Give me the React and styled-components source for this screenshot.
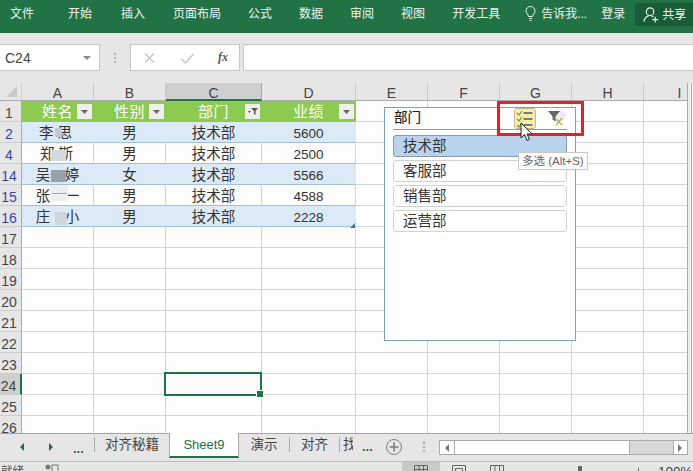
import React from 'react';
import styled, { createGlobalStyle } from 'styled-components';

const Global = createGlobalStyle`
  html, body { margin: 0; padding: 0; background: #fdfdfd; overflow: hidden; }
  * { box-sizing: border-box; }
  #root { width: 693px; height: 471px; }
`;
const FONT = `"Liberation Sans", "Noto Sans CJK SC", sans-serif`;

const Page = styled.div`
  position: relative; width: 693px; height: 471px; overflow: hidden;
  display: flex; flex-direction: column; background: #fdfdfd;
  font-family: ${FONT}; color: #333;
`;
const Ribbon = styled.div`
  height: 33px; flex: none; background: #217346; color: #eef5f1;
  display: flex; align-items: flex-start; font-size: 12px; line-height: 14px;
`;
const Tab = styled.div`
  margin-left: ${p => p.$gap}px; padding-top: 7px; white-space: nowrap;
`;
const Tell = styled.div`
  margin-left: ${p => p.$gap}px; padding-top: 7px; display: flex; align-items: flex-start; gap: 5px; white-space: nowrap;
  svg { margin-top: -1px; flex: none; }
`;
const Share = styled.div`
  margin-left: 10px; margin-top: 3px; width: 58px; height: 23px; background: #1a5c38;
  display: flex; align-items: center; padding-left: 8px; gap: 3px; white-space: nowrap;
`;
const FormulaBar = styled.div`
  height: 50px; flex: none; background: #e6e6e6; padding-top: 11px;
  display: flex; align-items: flex-start;
`;
const NameBox = styled.div`
  width: 100px; height: 27px; background: #fff; border: 1px solid #c6c6c6; border-left: none;
  display: flex; align-items: center; justify-content: space-between; padding: 0 8px 0 5px;
  font-size: 14px; color: #444;
`;
const Caret = styled.span`
  width: 0; height: 0; border-left: 4px solid transparent; border-right: 4px solid transparent;
  border-top: 4px solid #8a8a8a;
`;
const Dots = styled.div`
  width: 30px; height: 27px; display: flex; flex-direction: column; justify-content: center; align-items: center; gap: 2px;
  span { width: 2px; height: 2px; background: #b4b4b4; }
`;
const FormulaButtons = styled.div`
  width: 110px; height: 27px; background: #fff; border: 1px solid #c6c6c6; display: flex; align-items: center;
  justify-content: space-between; padding: 0 11px 0 12px;
`;
const FormulaInput = styled.div`
  flex: 1; height: 27px; margin-left: 3px; background: #fff; border: 1px solid #c6c6c6; border-right: none;
`;
const Fx = styled.span`
  font-family: "Liberation Serif", serif; font-style: italic; font-weight: bold; font-size: 12px; color: #555;
`;
const Sheet = styled.div`
  position: relative; height: 350px; flex: none; overflow: hidden; display: flex; background: #fdfdfd;
`;
const GridArea = styled.div`
  width: 688px; flex: none; display: flex; flex-direction: column; border-right: 1px solid #ababab; overflow: hidden;
`;
const HeaderRow = styled.div`
  display: flex; height: 18px; flex: none; background: #e6e6e6; border-bottom: 1px solid #ababab;
`;
const Corner = styled.div`
  width: 22px; flex: none; position: relative; border-right: 1px solid #d0d0d0;
  &::after { content: ''; position: absolute; right: 4px; bottom: 3px; width: 0; height: 0;
    border-left: 11px solid transparent; border-bottom: 11px solid #c8c8c8; }
`;
const ColHead = styled.div`
  width: ${p => p.$w}px; flex: none; text-align: center; font-size: 14px; line-height: 20px; color: #444;
  border-right: 1px solid ${p => p.$active ? '#a8a8a8' : '#c8c8c8'};
  background: ${p => p.$active ? '#cfcfcf' : 'transparent'};
  ${p => p.$active && 'border-bottom: 2px solid #217346; height: 18px;'}
`;
const Row = styled.div`
  display: flex; height: 21px; flex: none;
`;
const RowHead = styled.div`
  width: 22px; flex: none; background: ${p => p.$active ? '#cfcfcf' : '#e6e6e6'};
  border-right: ${p => p.$active ? '2px solid #217346' : '1px solid #ababab'};
  border-bottom: 1px solid #cdcdcd; overflow: hidden;
  color: ${p => p.$hidden ? '#3344b0' : '#444'}; font-size: 14px; line-height: 25px; padding-right: 3px; text-align: center;
`;
const Cell = styled.div`
  width: ${p => p.$w}px; flex: none; border-right: 1px solid ${p => p.$line || '#d4d4d4'};
  border-bottom: 1px solid ${p => p.$under || '#d4d4d4'}; background: ${p => p.$bg || 'transparent'};
  color: ${p => p.$head ? '#fff' : '#333'}; font-size: ${p => p.$head ? 15 : 14.5}px; line-height: ${p => p.$head ? 21 : 23}px; text-align: center;
  position: relative; white-space: nowrap; letter-spacing: ${p => p.$head ? '0.5px' : 0};
  padding-right: ${p => p.$pr || 0}px;
`;
const Num = styled.span`font-size: 13.5px; color: #333;`;
const FilterBtn = styled.span`
  position: absolute; right: ${p => p.$r}px; top: 3px; width: 15px; height: 15px; background: #efefef;
  display: flex; align-items: center; justify-content: center;
`;
const Blur = styled.div`
  position: absolute; background: ${p => p.$c}; filter: blur(0.7px);
`;
const Selection = styled.div`
  position: absolute; left: 164px; top: 289px; width: 98px; height: 24px; border: 2px solid #217346;
  &::after { content: ''; position: absolute; right: -4px; bottom: -4px; width: 6px; height: 6px; background: #217346; border: 1px solid #fff; }
`;
const Slicer = styled.div`
  position: absolute; left: 384px; top: 24px; width: 192px; height: 234px; background: #fff;
  border: 1px solid #7ba0bb; padding: 0 8px;
`;
const SlicerHead = styled.div`
  height: 22px; border-bottom: 1px solid #7ba0bb; font-size: 13.5px; line-height: 19px; color: #222;
  margin-bottom: 5px; padding-left: 1px; position: relative;
  -webkit-text-stroke: 0.2px #222;
`;
const SlicerItem = styled.div`
  height: 22px; margin-bottom: 3px; border-radius: 3px; font-size: 14.5px; line-height: 20px; padding-left: 9px; color: #333;
  border: 1px solid ${p => p.$on ? '#8a9aa8' : '#d2d2d2'}; background: ${p => p.$on ? '#bad3ec' : '#fff'};
`;
const IconWrap = styled.div`
  position: absolute; left: ${p => p.$l}px; top: ${p => p.$t}px; line-height: 0;
`;
const MultiBtn = styled.div`
  position: absolute; left: 121px; top: 0; width: 22px; height: 21px; background: #fbeda8; border: 1px solid #c0b68f; border-radius: 3px;
  line-height: 0;
`;
const Tip = styled.div`
  position: absolute; left: 518px; top: 69px; height: 18px; padding: 0 3px; background: #fdfdfd; border: 1px solid #c9c9c9;
  font-size: 11.500px; line-height: 16px; color: #666; white-space: nowrap;
`;
const RedBox = styled.div`
  position: absolute; left: 497px; top: 18px; width: 87px; height: 35px; border: 3px solid #ee1c25;
`;
const Cursor = styled.svg`
  position: absolute; left: 520px; top: 39px;
`;
const RightEdge = styled.div`
  width: 4px; flex: none; background: #eeeeee; border-right: 1px solid #ababab;
`;
const TabsBar = styled.div`
  height: 29px; flex: none; background: #e6e6e6; border-top: 1px solid #a5a5a5; display: flex; align-items: flex-start;
  position: relative; border-bottom: 1px solid #bdbdbd; font-size: 13px;
`;
const NavCluster = styled.div`
  width: 94px; height: 25px; flex: none; display: flex; align-items: center; padding-left: 20px; color: #1f6b3f;
`;
const Arrow = styled.span`
  width: 0; height: 0; border-top: 4px solid transparent; border-bottom: 4px solid transparent;
  ${p => p.$left ? 'border-right: 4px solid #1f6b3f;' : 'border-left: 4px solid #1f6b3f;'}
  margin-right: ${p => p.$mr}px;
`;
const More = styled.span`
  font-size: 13px; font-weight: bold; color: #1f6b3f; line-height: 12px; flex: none;
  ${p => p.$ml ? `margin: 7px 0 0 ${p.$ml}px;` : 'margin-top: 4px;'}
`;
const SheetTab = styled.div`
  width: ${p => p.$w}px; flex: none; text-align: ${p => p.$clip ? 'left' : 'center'}; color: #444; font-size: 13.5px;
  border-left: ${p => p.$plain ? 'none' : '1px solid #ababab'}; margin-top: 3px; height: 15px; line-height: 15px; overflow: hidden;
  padding-left: ${p => p.$clip ? 3 : 0}px;
`;
const ActiveTab = styled.div`
  width: 70px; flex: none; text-align: center; line-height: 21px; background: #fff; color: #217346; font-size: 13px;
  border-left: 1px solid #ababab; border-right: 1px solid #ababab; border-bottom: 2px solid #217346; margin-top: -1px; height: 25px; padding-top: 1px;
`;
const AddBtn = styled.div`
  width: 16px; height: 16px; border-radius: 50%; border: 1.5px solid #7e7e7e; margin: 5px 0 0 13px; flex: none; line-height: 0;
  display: flex; align-items: center; justify-content: center;
`;
const Vdots = styled.div`
  width: 2px; margin-left: 21px; margin-top: 8px; flex: none; height: 10px; display: flex; flex-direction: column; justify-content: space-between;
  span { width: 2px; height: 2px; background: #b0b0b0; }
`;
const HScroll = styled.div`
  width: 249px; height: 15px; margin: 6px 0 0 14px; border: 1px solid #ababab; background: #d8d8d8; display: flex; flex: none;
`;
const ScrollBtn = styled.div`
  width: 14px; background: #fff; display: flex; align-items: center; justify-content: center; flex: none;
  &:last-child { margin-left: auto; border-left: 1px solid #ababab; }
`;
const Thumb = styled.div`
  width: 176px; background: #fff; border: 1px solid #ababab; border-top: none; border-bottom: none;
`;
const ScrollArrow = styled.span`
  width: 0; height: 0; border-top: 4px solid transparent; border-bottom: 4px solid transparent;
  ${p => p.$left ? 'border-right: 4px solid #777;' : 'border-left: 4px solid #777;'}
`;
const Status = styled.div`
  height: 9px; flex: none; background: #e6e6e6; display: flex; color: #555; overflow: hidden;
`;
const StatusText = styled.span`
  width: 24px; flex: none; padding: 2px 0 0 1px; font-size: 11.500px; line-height: 14px;
`;
const StatusIcon = styled.span`
  margin: 2px 0 0 ${p => p.$ml}px; line-height: 0; flex: none;
`;
const ViewSlot = styled.div`
  width: 38px; flex: none; margin-left: ${p => p.$ml || 0}px; height: 9px; display: flex; justify-content: center; padding-top: 3px;
  background: ${p => p.$on ? '#c9c9c9' : 'transparent'}; line-height: 0;
`;
const ZoomMark = styled.span`
  width: 4px; height: 8px; background: #666; margin: 4px 0 0 ${p => p.$ml}px; flex: none;
`;
const ZoomTick = styled.span`
  width: 1px; height: 4px; background: #666; margin: 6px 0 0 ${p => p.$ml}px; flex: none;
`;
const ZoomText = styled.span`
  margin: 3px 0 0 ${p => p.$ml}px; font-size: 13.500px; line-height: 14px; color: #444; white-space: nowrap;
`;

const cols = [
  ['A', 72], ['B', 72], ['C', 96], ['D', 94], ['E', 72], ['F', 72], ['G', 72], ['H', 72], ['I', 72],
];
const headRows = ['1', '2', '4', '14', '15', '16', '17', '18', '19', '20', '21', '22', '23', '24', '25', '26'];
const data = [
  ['李 思', '男', '技术部', '5600', 4],
  ['郑 斯', '男', '技术部', '2500', 2],
  ['吴　婷', '女', '技术部', '5566', 0],
  ['张　一', '男', '技术部', '4588', 0],
  ['庄　小', '男', '技术部', '2228', 0],
];
const BLUE = '#dce9f6';
const RULE = '#9fbfdf';

const FilterIcon = ({ active }) => (
  <svg width="11" height="9" viewBox="0 0 11 9">
    {active
      ? <><path d="M4 1h7L8.500 4v4L7 7V4z" fill="#555" /><path d="M1 4h3L2.500 6z" fill="#555" /></>
      : <path d="M2 3h7L5.500 7z" fill="#666" />}
  </svg>
);

const ChecklistIcon = () => (
  <svg width="20" height="19" viewBox="0 0 20 19">
    <path d="M2 4l2 2 3-4M2 10l2 2 3-4M2 16l2 2 3-4" fill="none" stroke="#6e9a4b" strokeWidth="1.2" />
    <path d="M8.500 4h9M8.500 10h9M8.500 16h9" stroke="#4a5a6a" strokeWidth="1.3" />
  </svg>
);
const ClearFilterIcon = () => (
  <svg width="19" height="17" viewBox="0 0 19 17">
    <circle cx="13" cy="6" r="6" fill="#f6e8f6" />
    <path d="M1 1h12L8.500 6.500v5L5.500 9.500v-3z" fill="#666" />
    <path d="M9 15l6-7M9 9l6 6" stroke="#a4bf3e" strokeWidth="1.4" />
  </svg>
);

export default function App() {
  return (
    <Page>
      <Global />
      <Ribbon>
        <Tab $gap={10}>文件</Tab>
        <Tab $gap={34}>开始</Tab>
        <Tab $gap={29}>插入</Tab>
        <Tab $gap={28}>页面布局</Tab>
        <Tab $gap={27}>公式</Tab>
        <Tab $gap={27}>数据</Tab>
        <Tab $gap={27}>审阅</Tab>
        <Tab $gap={27}>视图</Tab>
        <Tab $gap={27}>开发工具</Tab>
        <Tell $gap={25}>
          <svg width="11" height="16" viewBox="0 0 11 16" fill="none" stroke="#eef5f1" strokeWidth="1">
            <path d="M3.500 10.500C3.500 8.500 1 7.500 1 5a4.500 4.500 0 0 1 9 0c0 2.500-2.500 3.500-2.500 5.500z" />
            <path d="M4 12.500h3M4.500 14.500h2" />
          </svg>
          告诉我...
        </Tell>
        <Tab $gap={14}>登录</Tab>
        <Share>
          <svg width="16" height="17" viewBox="0 0 17 17" fill="none" stroke="#eef5f1" strokeWidth="1.2">
            <circle cx="7.500" cy="5.500" r="4" />
            <path d="M1 16c.5-3 2.500-5.500 5-6M9 10l2 1M10 14h6M13 11v6" />
          </svg>
          共享
        </Share>
      </Ribbon>
      <FormulaBar>
        <NameBox>C24<Caret /></NameBox>
        <Dots><span /><span /><span /></Dots>
        <FormulaButtons>
          <svg width="13" height="12" viewBox="0 0 12 12"><path d="M1.500 1.500l9 9M10.500 1.500l-9 9" stroke="#c4c4c4" strokeWidth="1.400" /></svg>
          <svg width="15" height="12" viewBox="0 0 14 12"><path d="M1 7l4 4 8-9" fill="none" stroke="#c4c4c4" strokeWidth="1.400" /></svg>
          <Fx>fx</Fx>
        </FormulaButtons>
        <FormulaInput />
      </FormulaBar>
      <Sheet>
        <GridArea>
          <HeaderRow>
            <Corner />
            {cols.map(([n, w]) => <ColHead key={n} $w={w} $active={n === 'C'}>{n}</ColHead>)}
          </HeaderRow>
          {headRows.map((label, i) => {
            const isHead = i === 0;
            const isData = i >= 1 && i <= 5;
            const shaded = i % 2 === 1;
            return (
              <Row key={label}>
                <RowHead $active={label === '24'} $hidden={isData}>{label}</RowHead>
                {cols.map(([n, w], c) => {
                  if (isHead && c < 4) {
                    const t = ['姓名', '性别', '部门', '业绩'][c];
                    return (
                      <Cell key={n} $w={w} $bg="#8dca52" $head $line="#8dca52" $under="#8dca52">
                        {t}
                        <FilterBtn $r={1}><FilterIcon active={c === 2} /></FilterBtn>
                      </Cell>
                    );
                  }
                  if (isData && c < 4) {
                    const row = data[i - 1];
                    return (
                      <Cell key={n} $w={w} $bg={shaded ? BLUE : '#fdfdfd'} $under={RULE} $line={shaded ? BLUE : '#d4d4d4'} $pr={c === 0 ? row[4] : 0}>
                        {c === 3 ? <Num>{row[c]}</Num> : row[c]}
                      </Cell>
                    );
                  }
                  return <Cell key={n} $w={w} />;
                })}
              </Row>
            );
          })}
        </GridArea>
        <RightEdge />
        <Blur $c="#c4c8ce" style={{ left: 55, top: 45, width: 7, height: 9 }} />
        <Blur $c="#d5d8dc" style={{ left: 51, top: 67, width: 15, height: 11 }} />
        <Blur $c="#98a1ab" style={{ left: 51, top: 87, width: 15, height: 12 }} />
        <Blur $c="#eeeff0" style={{ left: 50, top: 102, width: 18, height: 16 }} />
        <Blur $c="#a9a9a9" style={{ left: 52, top: 110, width: 15, height: 1 }} />
        <Blur $c="#cfd6dd" style={{ left: 55, top: 129, width: 12, height: 13 }} />
        <svg width="5" height="5" viewBox="0 0 5 5" style={{ position: 'absolute', left: 350, top: 140 }}><path d="M0 5L5 0v5z" fill="#3d6eb0" /></svg>
        <Selection />
        <Slicer>
          <SlicerHead>
            部门
            <MultiBtn><ChecklistIcon /></MultiBtn>
            <IconWrap $l={154} $t={2}><ClearFilterIcon /></IconWrap>
          </SlicerHead>
          <SlicerItem $on>技术部</SlicerItem>
          <SlicerItem>客服部</SlicerItem>
          <SlicerItem>销售部</SlicerItem>
          <SlicerItem>运营部</SlicerItem>
        </Slicer>
        <Tip>多选 (Alt+S)</Tip>
        <RedBox />
        <Cursor width="14" height="22" viewBox="0 0 14 22">
          <path d="M1 1v15l3.500-3.500L7 18.500l2.500-1L7 12h5z" fill="#fff" stroke="#222" strokeWidth="1" />
        </Cursor>
      </Sheet>
      <TabsBar>
        <NavCluster>
          <Arrow $left $mr={25} />
          <Arrow $mr={20} />
          <More>...</More>
        </NavCluster>
        <SheetTab $w={75}>对齐秘籍</SheetTab>
        <ActiveTab>Sheet9</ActiveTab>
        <SheetTab $w={50} $plain>演示</SheetTab>
        <SheetTab $w={50}>对齐</SheetTab>
        <SheetTab $w={14} $clip>找</SheetTab>
        <More $ml={9}>...</More>
        <AddBtn>
          <svg width="10" height="10" viewBox="0 0 10 10"><path d="M5 0.500v9M0.500 5h9" stroke="#7e7e7e" strokeWidth="1.600" /></svg>
        </AddBtn>
        <Vdots><span /><span /><span /></Vdots>
        <HScroll>
          <ScrollBtn><ScrollArrow $left /></ScrollBtn>
          <Thumb />
          <ScrollBtn><ScrollArrow /></ScrollBtn>
        </HScroll>
      </TabsBar>
      <Status>
        <StatusText>就绪</StatusText>
        <StatusIcon $ml={21}>
          <svg width="14" height="8" viewBox="0 0 14 8"><circle cx="3" cy="3" r="2.500" fill="#777" /><rect x="7" y="1" width="6" height="7" fill="none" stroke="#777" /></svg>
        </StatusIcon>
        <ViewSlot $on $ml={343}>
          <svg width="14" height="12" viewBox="0 0 14 12" fill="none" stroke="#666"><path d="M.5.500h13v11H.5zM.5 4.500h13M5 .500v11M9.500 .500v11" /></svg>
        </ViewSlot>
        <ViewSlot>
          <svg width="14" height="12" viewBox="0 0 14 12" fill="none" stroke="#666"><path d="M.5.500h13v11H.5zM3.500 3.500h7v8h-7z" /></svg>
        </ViewSlot>
        <ViewSlot>
          <svg width="14" height="12" viewBox="0 0 14 12" fill="none" stroke="#666"><path d="M.5.500h13v11H.5zM5 .500v11M9.500 .500v11" /></svg>
        </ViewSlot>
        <ZoomMark $ml={62} />
        <ZoomTick $ml={56} />
        <ZoomText $ml={19}>100%</ZoomText>
      </Status>
    </Page>
  );
}
